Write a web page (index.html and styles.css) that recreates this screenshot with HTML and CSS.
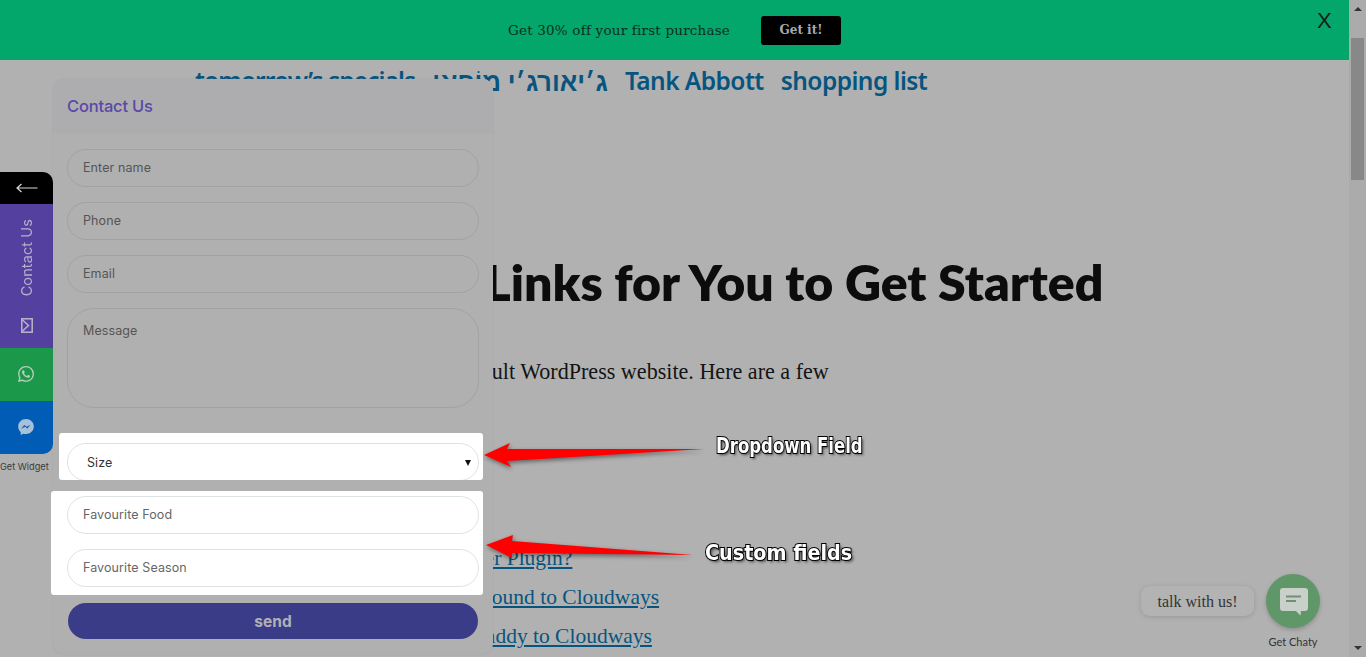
FILE: index.html
```html
<!DOCTYPE html>
<html lang="en">
<head>
<meta charset="utf-8">
<title>Contact form widget</title>
<link rel="stylesheet" href="styles.css">
</head>
<body>
<div class="window">
  <div class="viewport">
    <div class="promo">
      <span class="promo-text">Get 30% off your first purchase</span>
      <span class="promo-btn">Get it!</span>
      <span class="promo-close">X</span>
    </div>
    <nav class="site-nav">
      <a class="nav-first">tomorrow’s specials</a>
      <a class="nav-he" dir="rtl">ג׳יאורג׳י מוֹפּאוּ</a>
      <a>Tank Abbott</a>
      <a>shopping list</a>
    </nav>
    <main class="content">
      <h1>Some Helpful Links for You to Get Started</h1>
      <p class="intro">Congratulations! This is your default WordPress website. Here are a few</p>
      <ul class="links">
        <li><a>Need a Free Contact Forms Builder Plugin?</a></li>
        <li><a>How to Transfer Blog from SiteGround to Cloudways</a></li>
        <li><a>How to Transfer Blogs from GoDaddy to Cloudways</a></li>
      </ul>
    </main>

    <aside class="side">
      <div class="side-back">
        <svg width="24" height="10" viewBox="0 0 24 10"><path d="M22.500 5H2M6.500 1 2 5l4.500 4" fill="none" stroke="#d8d8d8" stroke-width="1.200"/></svg>
      </div>
      <div class="side-contact">
        <span class="side-label">Contact Us</span>
        <svg class="side-mail" width="12" height="15" viewBox="0 0 12 15"><rect x=".8" y=".8" width="10.400" height="13.400" fill="none" stroke="#b4afc9" stroke-width="1.600"/><path d="M1 1.500 7.500 7.500 1 13.500" fill="none" stroke="#b4afc9" stroke-width="1.600"/></svg>
      </div>
      <div class="side-wa">
        <svg width="16" height="16" viewBox="0 0 24 24"><path fill="#b9cdbd" d="M17.472 14.382c-.297-.149-1.758-.867-2.03-.967-.273-.099-.471-.148-.67.15-.197.297-.767.966-.94 1.164-.173.199-.347.223-.644.075-.297-.15-1.255-.463-2.39-1.475-.883-.788-1.48-1.761-1.653-2.059-.173-.297-.018-.458.13-.606.134-.133.298-.347.446-.52.149-.174.198-.298.298-.497.099-.198.05-.371-.025-.52-.075-.149-.669-1.612-.916-2.207-.242-.579-.487-.5-.669-.51-.173-.008-.371-.01-.57-.01-.198 0-.52.074-.792.372-.272.297-1.04 1.016-1.04 2.479 0 1.462 1.065 2.875 1.213 3.074.149.198 2.096 3.2 5.077 4.487.709.306 1.262.489 1.694.625.712.227 1.36.195 1.871.118.571-.085 1.758-.719 2.006-1.413.248-.694.248-1.289.173-1.413-.074-.124-.272-.198-.57-.347m-5.421 7.403h-.004a9.870 9.870 0 01-5.031-1.378l-.361-.214-3.741.982.998-3.648-.235-.374a9.860 9.860 0 01-1.51-5.26c.001-5.45 4.436-9.884 9.888-9.884 2.64 0 5.122 1.03 6.988 2.898a9.825 9.825 0 012.893 6.994c-.003 5.45-4.437 9.884-9.885 9.884m8.413-18.297A11.815 11.815 0 0012.05 0C5.495 0 .16 5.335.157 11.892c0 2.096.547 4.142 1.588 5.945L.057 24l6.305-1.654a11.882 11.882 0 005.683 1.448h.005c6.554 0 11.89-5.335 11.893-11.893a11.821 11.821 0 00-3.48-8.413z"/></svg>
      </div>
      <div class="side-ms">
        <svg width="16" height="16" viewBox="0 0 16 16"><path fill="#a9c0da" d="M8 0C3.600 0 .2 3.200.2 7.500c0 2.300.9 4.200 2.500 5.500v3l2.600-1.300c.8.200 1.700.300 2.700.300 4.400 0 7.800-3.200 7.800-7.500S12.400 0 8 0z"/><path fill="#005cb5" d="M3.200 9.800 6.300 5.900l2.300 1.800 3.900-2-3.200 3.900-2.200-1.800z"/></svg>
      </div>
      <div class="side-credit">Get Widget</div>
    </aside>

    <section class="panel">
      <header class="panel-head">Contact Us</header>
      <div class="panel-body">
        <div class="field">Enter name</div>
        <div class="field">Phone</div>
        <div class="field">Email</div>
        <div class="field field-area">Message</div>
        <div class="mark mark-select">
          <div class="field field-select"><span>Size</span><i class="caret"></i></div>
        </div>
        <div class="mark mark-custom">
          <div class="field">Favourite Food</div>
          <div class="field">Favourite Season</div>
        </div>
        <div class="send">send</div>
      </div>
    </section>

    <svg class="arrows" width="240" height="130" viewBox="0 0 240 130">
      <polygon points="4,20 30,8 27,14 224,14 27,26 31,32" fill="#ff0000"/>
      <polygon points="6,110 33,100 32,106 213,120 32,118 32,123" fill="#ff0000"/>
    </svg>
    <div class="note note-drop">Dropdown Field</div>
    <div class="note note-custom">Custom fields</div>

    <div class="chaty">
      <div class="chaty-tip">talk with us!</div>
      <div class="chaty-btn">
        <svg width="30" height="30" viewBox="0 0 30 30"><path fill="#c9d0ca" d="M4 1h22a3 3 0 0 1 3 3v17a3 3 0 0 1-3 3h-4l-.5 4.500L17 24H4a3 3 0 0 1-3-3V4a3 3 0 0 1 3-3z"/><path d="M7 9.500h15M7 14h10" stroke="#6f8f76" stroke-width="2" fill="none"/></svg>
      </div>
      <div class="chaty-credit">Get Chaty</div>
    </div>
  </div>
  <div class="scrollbar">
    <i class="sb-up"></i>
    <i class="sb-thumb"></i>
    <i class="sb-down"></i>
  </div>
</div>
</body>
</html>
```

FILE: styles.css
```css
* { box-sizing: border-box; }
html, body { margin: 0; height: 100%; overflow: hidden; }
body { background: #b1b1b1; }

.window { display: flex; width: 1366px; height: 657px; overflow: hidden; }
.viewport { position: relative; flex: 1; min-width: 0; overflow: hidden; }

/* promo bar */
.promo {
  position: relative;
  height: 60px;
  background: #03a76b;
  display: flex;
  align-items: center;
  justify-content: center;
  gap: 31px;
}
.promo-text { padding-top: 2px; font: 13.500px/1 "DejaVu Serif", serif; letter-spacing: .2px; color: #0b2f22; }
.promo-btn {
  width: 80px; height: 29px;
  background: #000; border-radius: 3px;
  color: #aaa;
  font: 700 12px/29px "DejaVu Serif", serif;
  text-align: center;
}
.promo-close {
  position: absolute; left: 1317px; top: 9px;
  font: 22px/24px "Liberation Sans", sans-serif;
  color: #1a1a1a;
}

/* underlying page */
.site-nav {
  display: flex; gap: 17px;
  padding: 4px 0 0 195px;
  font: 600 24.500px/34px "Noto Sans", sans-serif;
  letter-spacing: -.55px;
  color: #07557f;
}
.nav-first { letter-spacing: -.9px; }
.nav-he { font-size: 25.800px; letter-spacing: 0; }
.content { padding-left: 195px; }
h1 {
  margin: 150px 0 0 -26px;
  font: 800 50px/68px "Lato", sans-serif;
  color: #0c0c0c;
  white-space: nowrap;
}
.intro {
  margin: 41px 0 0 -6px;
  font: 22.100px/30px "Liberation Serif", serif;
  color: #141414;
  white-space: nowrap;
}
.links {
  list-style: none;
  margin: 152px 0 0; padding: 0;
  font: 21.500px/39px "Liberation Serif", serif;
  color: #07557f;
  white-space: nowrap;
}
.links a { text-decoration: underline; }

/* left sticky widget */
.side {
  position: absolute; left: 0; top: 172px; width: 53px;
  color: #b4afc9;
  font-family: "Inter", sans-serif;
}
.side-back {
  height: 32px; background: #000;
  border-top-right-radius: 10px;
  display: flex; align-items: center; justify-content: center;
}
.side-contact {
  height: 144px; background: #54409e;
  display: flex; flex-direction: column; align-items: center;
  padding-top: 15px;
}
.side-label {
  writing-mode: vertical-rl;
  transform: rotate(180deg);
  font-size: 14.500px; line-height: 16px;
  letter-spacing: .1px;
  white-space: nowrap;
}
.side-mail { margin-top: 22px; }
.side-wa, .side-ms {
  height: 53px;
  display: flex; align-items: center; justify-content: center;
  padding-right: 2px;
}
.side-wa { background: #1c984b; padding-bottom: 1px; }
.side-ms { background: #005cb5; border-bottom-right-radius: 10px; padding-bottom: 2px; }
.side-credit {
  margin-top: 7px;
  font-size: 9.200px; line-height: 12px;
  color: #3a3a3a;
  white-space: nowrap;
}

/* form panel */
.panel {
  position: absolute; left: 53px; top: 79px;
  width: 440px; height: 575px;
  background: #b0b0b0;
  border-radius: 10px;
  box-shadow: 0 0 2px rgba(0,0,0,.08);
  font-family: "Inter", sans-serif;
}
.panel-head {
  height: 55px;
  padding: 0 14px;
  background: #adadaf;
  border-radius: 10px 10px 0 0;
  font-size: 16.500px; line-height: 55px; font-weight: 500;
  letter-spacing: -.2px;
  color: #5a48ab;
}
.panel-body { display: flex; flex-direction: column; gap: 15px; padding: 15px 14px 0; }
.field {
  height: 38px;
  border: 1px solid #9fa3a3;
  border-radius: 19px;
  padding: 0 15px;
  font-size: 12.500px; line-height: 36px;
  letter-spacing: .1px;
  color: #555;
}
.field-area { height: 100px; border-radius: 27px; line-height: 44px; }
.mark {
  background: #fff;
  border-radius: 3px;
  margin-right: -4px;
  overflow: hidden;
}
.mark .field { border-color: #dde3e3; color: #666; }
.mark-select {
  margin-top: 10px; margin-left: -8px;
  height: 47px;
  padding: 10px 4px 0 8px;
}
.field-select {
  display: flex; align-items: center; justify-content: space-between;
  padding: 2px 7px 0 19px;
  color: #333 !important;
}
.caret {
  width: 0; height: 0;
  border: 3.500px solid transparent;
  border-top: 6px solid #111;
  border-bottom: 0;
}
.mark-custom {
  margin-top: -4px; margin-left: -16px;
  height: 104px;
  padding: 5px 4px 0 16px;
  display: flex; flex-direction: column; gap: 15px;
}
.send {
  margin: -7px 1px 0;
  height: 36px;
  background: #3b3c87;
  border-radius: 18px;
  color: #b0b0b8;
  font-size: 15.500px; font-weight: 700; line-height: 38px;
  text-align: center;
}

/* annotations */
.arrows {
  position: absolute; left: 480px; top: 435px;
  overflow: visible;
  filter: drop-shadow(1px 2px 2px rgba(0,0,0,.45));
}
.note {
  position: absolute;
  font: 700 22px/24px "DejaVu Sans Condensed", "Liberation Sans", sans-serif;
  color: #fff;
  -webkit-text-stroke: 2px #000;
  paint-order: stroke fill;
  text-shadow: 2px 2px 3px rgba(0,0,0,.6);
  white-space: nowrap;
  transform-origin: left center;
}
.note-drop { left: 716px; top: 434px; transform: scaleX(.835); }
.note-custom { left: 705px; top: 541px; transform: scaleX(.97); }

/* chat launcher */
.chaty { position: absolute; left: 1141px; top: 574px; width: 180px; height: 76px; }
.chaty-tip {
  position: absolute; left: 0; top: 12px;
  width: 113px; height: 30px;
  background: #b3b3b3;
  border-radius: 9px;
  box-shadow: 0 1px 5px rgba(0,0,0,.14);
  font: 16px/31px "Liberation Serif", serif;
  color: #333;
  text-align: center;
}
.chaty-btn {
  position: absolute; left: 125px; top: 0;
  width: 54px; height: 54px;
  border-radius: 50%;
  background: #5f9768;
  box-shadow: 0 2px 4px rgba(0,0,0,.2);
  display: flex; align-items: center; justify-content: center;
  padding: 2px 0 0 1px;
}
.chaty-credit {
  position: absolute; left: 112px; width: 80px; top: 61px;
  font: 11px/14px "Lato", sans-serif;
  color: #333;
  text-align: center;
}

/* scrollbar */
.scrollbar {
  width: 17px; height: 100%;
  background: #ababab;
  display: flex; flex-direction: column; align-items: center;
}
.sb-up, .sb-down { width: 0; height: 0; border: 4px solid transparent; }
.sb-up { border-bottom: 4px solid #333; border-top: 0; margin-top: 7px; }
.sb-thumb { width: 13px; height: 142px; margin-top: 27px; background: #888; }
.sb-down { border-top: 4px solid #333; border-bottom: 0; margin-top: auto; margin-bottom: 7px; }
```
